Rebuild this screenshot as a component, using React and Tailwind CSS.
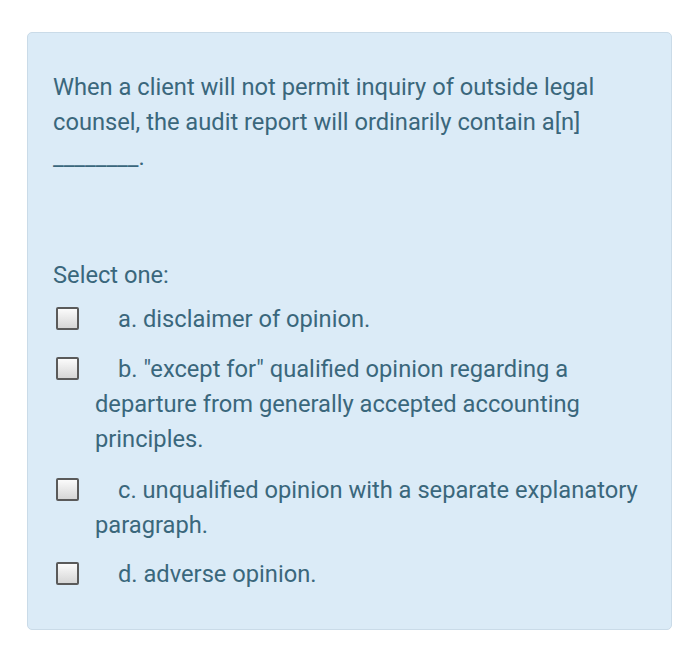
import React from "react";

function Box() {
  return (
    <span className="inline-block align-middle w-[23px] h-[23px] border-2 border-[#5a5a5a] rounded-[2px] bg-gradient-to-b from-[#fbfbfb] to-[#d6d6d6] mr-[39px] relative top-[-2px]" />
  );
}

function Option({ children, className = "" }) {
  return (
    <div className={"pl-[42px] indent-[-39px] " + className}>
      <Box />
      {children}
    </div>
  );
}

export default function App() {
  return (
    <div className="w-[700px] h-[672px] bg-white pt-[32px] pl-[27px]" style={{ fontFamily: "Roboto, 'Noto Sans', sans-serif" }}>
      <div className="w-[645px] h-[598px] bg-[#dbebf7] border border-[#cadbe8] rounded-[5px] pl-[25px] pr-[24px] pt-[37px] text-[23.7px] leading-[35px] text-[#3a677c]">
        <p>
          When a client will not permit inquiry of outside legal counsel, the audit report will ordinarily contain a[n] ________.
        </p>
        <p className="mt-[83px]">Select one:</p>
        <Option className="mt-[9px]">a. disclaimer of opinion.</Option>
        <Option className="mt-[15px]">
          b. "except for" qualified opinion regarding a departure from generally accepted accounting principles.
        </Option>
        <Option className="mt-[16px]">c. unqualified opinion with a separate explanatory paragraph.</Option>
        <Option className="mt-[14px]">d. adverse opinion.</Option>
      </div>
    </div>
  );
}
